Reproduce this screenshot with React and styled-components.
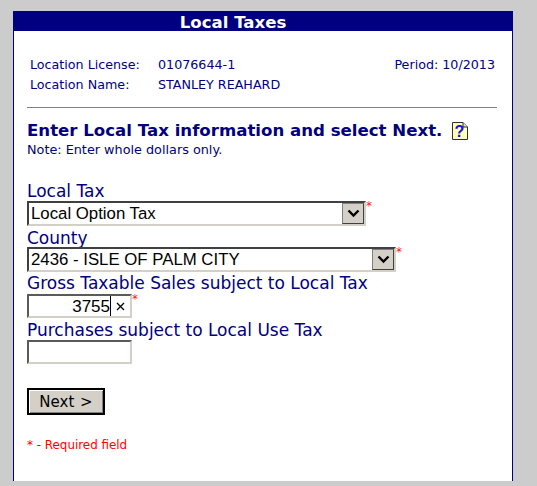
import React from 'react';
import styled, { createGlobalStyle } from 'styled-components';

const GlobalStyle = createGlobalStyle`
  html, body {
    margin: 0;
    padding: 0;
    background: #cccccc;
  }
`;

const Page = styled.div`
  width: 537px;
  height: 486px;
  padding: 11px 24px 5px 13px;
  box-sizing: border-box;
  overflow: hidden;
`;

const Panel = styled.div`
  width: 500px;
  height: 470px;
  box-sizing: border-box;
  background: #fff;
  border: solid #000080;
  border-width: 0 1px;
  font-family: 'DejaVu Sans', Verdana, sans-serif;
  color: #000080;
`;

const Header = styled.div`
  height: 20px;
  margin: 0 -1px;
  padding-right: 60px;
  background: #000080;
  color: #fff;
  font-size: 16.6px;
  font-weight: bold;
  line-height: 23px;
  text-align: center;
`;

const Content = styled.div`
  padding: 0 15px 0 13px;
`;

const InfoTable = styled.div`
  display: grid;
  grid-template-columns: 128px 1fr auto;
  grid-auto-rows: 20px;
  padding: 24px 2px 0 3px;
  font-size: 12.7px;
  line-height: 20px;
`;

const Rule = styled.hr`
  height: 1px;
  margin: 12px 0 0;
  border: 0;
  background: #808080;
`;

const Title = styled.h1`
  display: flex;
  align-items: center;
  gap: 10px;
  margin: 13px 0 0;
  font-size: 16.6px;
  font-weight: bold;
  line-height: 20px;
`;

const HelpIcon = styled.svg`
  display: block;
  width: 16px;
  height: 18px;
`;

const Note = styled.div`
  font-size: 12.8px;
  line-height: 16px;
  margin-top: 1px;
`;

const Form = styled.form`
  margin-top: 23px;
`;

const Label = styled.label`
  display: block;
  font-size: 17px;
  height: ${({ $h }) => $h || 20}px;
  line-height: ${({ $lh }) => $lh || 20}px;
`;

const FieldRow = styled.div`
  display: flex;
  align-items: flex-start;
`;

const SelectBox = styled.div`
  position: relative;
  width: ${({ $w }) => $w}px;
  height: 25px;
  box-sizing: border-box;
  border: 2px solid;
  border-color: #404040 #d4d0c8 #d4d0c8 #404040;
`;

const Select = styled.select`
  appearance: none;
  display: block;
  width: 100%;
  height: 21px;
  margin: 0;
  padding: 0 0 0 2px;
  border: 0;
  border-radius: 0;
  outline: 0;
  background: #fff;
  color: #000;
  font-family: 'Liberation Sans', Arial, sans-serif;
  font-size: 16.8px;
`;

const ArrowButton = styled.span`
  position: absolute;
  top: 0;
  right: 0;
  width: 22px;
  height: 21px;
  box-sizing: border-box;
  display: flex;
  align-items: center;
  justify-content: center;
  background: #d4d0c8;
  border: 1px solid;
  border-color: #808080 #404040 #404040 #808080;
  pointer-events: none;
`;

const Star = styled.span`
  color: #ff2020;
  font-size: 12px;
  line-height: 11px;
`;

const InputBox = styled.div`
  position: relative;
  width: 105px;
  height: 24px;
  box-sizing: border-box;
  border: 2px solid;
  border-color: #5a5a5a #d4d0c8 #d4d0c8 #5a5a5a;
  background: #fff;
`;

const Input = styled.input`
  display: block;
  width: 81px;
  height: 20px;
  box-sizing: border-box;
  margin: 0;
  padding: 2px 0 0;
  border: 0;
  outline: 0;
  background: transparent;
  color: #000;
  text-align: right;
  font-family: 'Liberation Sans', Arial, sans-serif;
  font-size: 17px;
  line-height: 18px;
`;

const Caret = styled.span`
  position: absolute;
  left: 81px;
  top: 0;
  width: 1px;
  height: 20px;
  background: #000;
`;

const ClearGlyph = styled.svg`
  position: absolute;
  left: 87px;
  top: 6px;
  width: 9px;
  height: 9px;
`;

const NextButton = styled.button`
  display: block;
  width: 78px;
  height: 27px;
  margin: 24px 0 0;
  padding: 0;
  box-sizing: border-box;
  border: 2px solid #000;
  box-shadow: inset 1px 1px 0 #fff, inset -1px -1px 0 #808080;
  background: #d4d0c8;
  color: #000;
  font-family: 'DejaVu Sans', Verdana, sans-serif;
  font-size: 15px;
  word-spacing: 1px;
`;

const Required = styled.div`
  margin-top: 22px;
  color: #ff0000;
  font-size: 11.9px;
  line-height: 16px;
`;

const Chevron = () => (
  <svg width="13" height="9" viewBox="0 0 13 9">
    <path d="M1.5 1.5 L6.5 6.5 L11.5 1.5" fill="none" stroke="#000" strokeWidth="2.4" />
  </svg>
);

const SelectField = ({ width, value }) => (
  <FieldRow>
    <SelectBox $w={width}>
      <Select value={value} readOnly>
        <option>{value}</option>
      </Select>
      <ArrowButton>
        <Chevron />
      </ArrowButton>
    </SelectBox>
    <Star>*</Star>
  </FieldRow>
);

export default function App() {
  return (
    <>
      <GlobalStyle />
      <Page>
        <Panel>
          <Header>Local Taxes</Header>
          <Content>
            <InfoTable>
              <span>Location License:</span>
              <span>01076644-1</span>
              <span>Period: 10/2013</span>
              <span>Location Name:</span>
              <span>STANLEY REAHARD</span>
            </InfoTable>
            <Rule />
            <Title>
              Enter Local Tax information and select Next.
              <HelpIcon viewBox="0 0 16 18">
                <path d="M0.5 0.5 H11 L15.5 5 V17.5 H0.5 Z" fill="#ffffb8" stroke="#303030" />
                <path d="M11 0.5 V5 H15.5" fill="#d8d8d8" stroke="#303030" />
                <text x="7.5" y="15" textAnchor="middle" fontFamily="'Liberation Sans', Arial, sans-serif" fontSize="16" fontWeight="bold" fill="#1010e0">?</text>
              </HelpIcon>
            </Title>
            <Note>Note: Enter whole dollars only.</Note>
            <Form>
              <Label>Local Tax</Label>
              <SelectField width={339} value="Local Option Tax" />
              <Label $h={21} $lh={24}>County</Label>
              <SelectField width={369} value="2436 - ISLE OF PALM CITY" />
              <Label $h={22} $lh={22}>Gross Taxable Sales subject to Local Tax</Label>
              <FieldRow>
                <InputBox>
                  <Input defaultValue="3755" />
                  <Caret />
                  <ClearGlyph viewBox="0 0 9 9">
                    <path d="M1 1 L8 8 M8 1 L1 8" stroke="#000" strokeWidth="1.3" />
                  </ClearGlyph>
                </InputBox>
                <Star>*</Star>
              </FieldRow>
              <Label $h={22} $lh={24}>Purchases subject to Local Use Tax</Label>
              <InputBox>
                <Input />
              </InputBox>
              <NextButton type="button">Next &gt;</NextButton>
              <Required>* - Required field</Required>
            </Form>
          </Content>
        </Panel>
      </Page>
    </>
  );
}
